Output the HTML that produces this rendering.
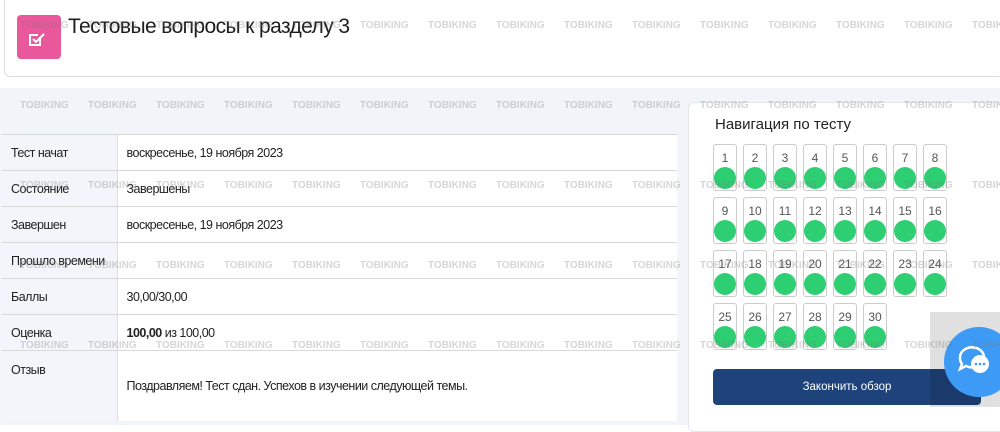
<!DOCTYPE html>
<html><head><meta charset="utf-8"><style>
*{margin:0;padding:0;box-sizing:border-box}
body{width:1000px;height:425px;overflow:hidden;background:#fff;font-family:"Liberation Sans","Noto Sans CJK SC",sans-serif;position:relative;color:#222}
.bg{position:absolute;left:0;top:88px;width:1000px;height:337px;background:#f1f4f9}
.hdr{position:absolute;left:4px;top:-5px;width:1000px;height:82px;border:1px solid #ddd;border-radius:6px;background:#fff}
.icon{position:absolute;left:17px;top:15px;width:44px;height:44px;background:#e8589b;border-radius:4px}
h1{position:absolute;left:68px;top:15px;font-weight:400;font-size:21px;color:#1d1d1d;letter-spacing:-0.6px}
table{position:absolute;left:2px;top:134px;width:675px;border-collapse:collapse;background:#fff;font-size:12.5px;letter-spacing:-0.5px}
td{height:36px;border-top:1px solid #d8d8d8;vertical-align:middle;padding-left:9px}
td:first-child{width:115px;background:#f3f5fa;border-right:1px solid #ddd}
.nav{position:absolute;left:688px;top:102px;width:320px;height:330px;background:#fff;border-radius:6px;border:1px solid #e3e6ee}
.nav h2{position:absolute;left:26px;top:13px;font-size:15px;font-weight:400;color:#222}
.c{position:absolute;width:24px;height:47px;border:1px solid #ccc;border-radius:3px;background:#fff;font-size:12px;color:#555;text-align:center;padding-top:6px}
.c i{position:absolute;left:0px;top:22px;width:22px;height:22px;border-radius:50%;background:#2ecf73}
.btn{position:absolute;left:713px;top:369px;width:268px;height:36px;background:#1e437a;border-radius:4px;color:#fff;font-size:11.5px;text-align:center;line-height:36px}
.chat{position:absolute;left:944px;top:327px;width:70px;height:70px;border-radius:50%;background:#3d9bf5}
.gray{position:absolute;left:930px;top:312px;width:70px;height:95px;background:rgba(0,0,0,0.12)}
.wm{position:absolute;font-size:10px;font-weight:700;color:rgba(120,120,120,0.3)}
</style></head><body>
<div class="hdr"></div>
<div class="bg"></div>
<div class="icon"><svg width="44" height="44"><path d="M23 22v8h-10v-10h8" fill="none" stroke="#fff" stroke-width="2"/><path d="M16 24l3 3 8-8" fill="none" stroke="#fff" stroke-width="2"/></svg></div>
<h1>Тестовые вопросы к разделу 3</h1>
<table>
<tr><td>Тест начат</td><td>воскресенье, 19 ноября 2023</td></tr>
<tr><td>Состояние</td><td>Завершены</td></tr>
<tr><td>Завершен</td><td>воскресенье, 19 ноября 2023</td></tr>
<tr><td>Прошло времени</td><td></td></tr>
<tr><td>Баллы</td><td>30,00/30,00</td></tr>
<tr><td>Оценка</td><td><b>100,00</b> из 100,00</td></tr>
<tr><td style="height:70px;vertical-align:top;padding-top:12px">Отзыв</td><td>Поздравляем! Тест сдан. Успехов в изучении следующей темы.</td></tr>
</table>
<div class="nav"><h2>Навигация по тесту</h2></div>
<div id="g"></div>
<div class="btn">Закончить обзор</div>
<div class="gray"></div>
<div class="chat"><svg width="70" height="70"><path d="M16 30a12 10 0 1 1 6 9l-6 3 2-5a10 10 0 0 1-2-7z" fill="none" stroke="#fff" stroke-width="2.5"/><circle cx="36" cy="37" r="9" fill="#fff"/><circle cx="32" cy="37" r="1.3" fill="#3d9bf5"/><circle cx="36" cy="37" r="1.3" fill="#3d9bf5"/><circle cx="40" cy="37" r="1.3" fill="#3d9bf5"/></svg></div>
<div id="w"></div>
<script>
var h='';for(var n=0;n<30;n++){var r=Math.floor(n/8),c=n%8;h+='<div class="c" style="left:'+(713+c*30)+'px;top:'+(144+r*53)+'px">'+(n+1)+'<i></i></div>';}
document.getElementById('g').innerHTML=h;
var w='';for(var y=27;y<425;y+=80)for(var x=20;x<1000;x+=68)w+='<div class="wm" style="left:'+x+'px;top:'+(y-7)+'px">TOBIKING</div>';
document.getElementById('w').innerHTML=w;
</script>
</body></html>
